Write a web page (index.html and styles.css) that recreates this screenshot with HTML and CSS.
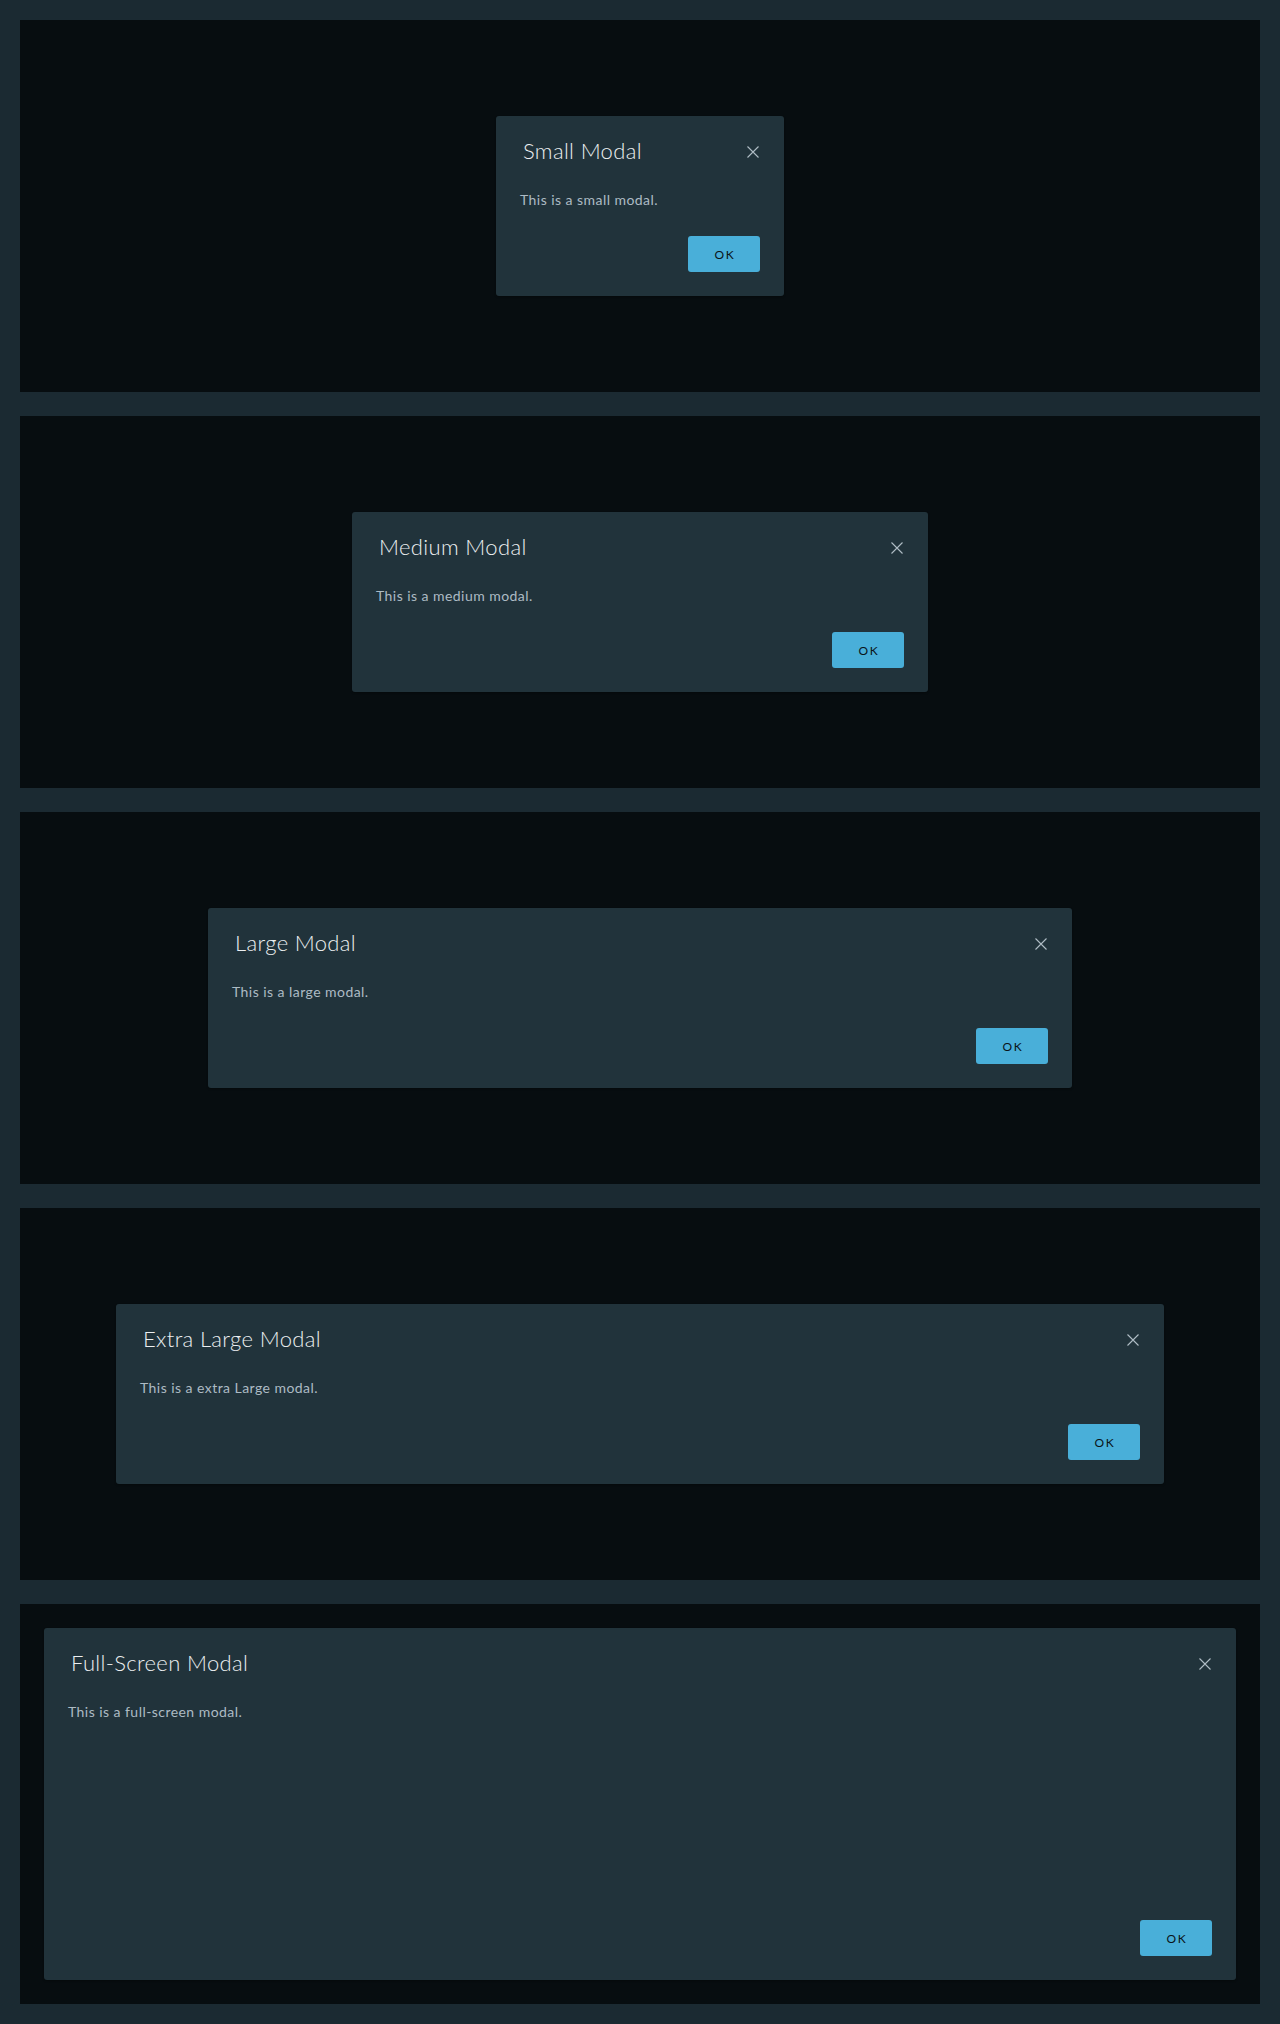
FILE: index.html
```html
<!DOCTYPE html>
<html lang="en">
<head>
<meta charset="utf-8">
<title>Modal sizes</title>
<link rel="stylesheet" href="styles.css">
</head>
<body>
<main class="page">
  <section class="stage">
    <div class="modal modal-sm">
      <div class="modal-header">
        <h3 class="modal-title">Small Modal</h3>
        <button class="close" aria-label="Close"><svg viewBox="0 0 12 12" width="12" height="12"><path d="M0.5 0.5 L11.5 11.5 M11.5 0.5 L0.5 11.5"/></svg></button>
      </div>
      <div class="modal-body">This is a small modal.</div>
      <div class="modal-footer"><button class="btn">OK</button></div>
    </div>
  </section>
  <section class="stage">
    <div class="modal modal-md">
      <div class="modal-header">
        <h3 class="modal-title">Medium Modal</h3>
        <button class="close" aria-label="Close"><svg viewBox="0 0 12 12" width="12" height="12"><path d="M0.5 0.5 L11.5 11.5 M11.5 0.5 L0.5 11.5"/></svg></button>
      </div>
      <div class="modal-body">This is a medium modal.</div>
      <div class="modal-footer"><button class="btn">OK</button></div>
    </div>
  </section>
  <section class="stage">
    <div class="modal modal-lg">
      <div class="modal-header">
        <h3 class="modal-title">Large Modal</h3>
        <button class="close" aria-label="Close"><svg viewBox="0 0 12 12" width="12" height="12"><path d="M0.5 0.5 L11.5 11.5 M11.5 0.5 L0.5 11.5"/></svg></button>
      </div>
      <div class="modal-body">This is a large modal.</div>
      <div class="modal-footer"><button class="btn">OK</button></div>
    </div>
  </section>
  <section class="stage">
    <div class="modal modal-xl">
      <div class="modal-header">
        <h3 class="modal-title">Extra Large Modal</h3>
        <button class="close" aria-label="Close"><svg viewBox="0 0 12 12" width="12" height="12"><path d="M0.5 0.5 L11.5 11.5 M11.5 0.5 L0.5 11.5"/></svg></button>
      </div>
      <div class="modal-body">This is a extra Large modal.</div>
      <div class="modal-footer"><button class="btn">OK</button></div>
    </div>
  </section>
  <section class="stage stage-full">
    <div class="modal modal-full">
      <div class="modal-header">
        <h3 class="modal-title">Full-Screen Modal</h3>
        <button class="close" aria-label="Close"><svg viewBox="0 0 12 12" width="12" height="12"><path d="M0.5 0.5 L11.5 11.5 M11.5 0.5 L0.5 11.5"/></svg></button>
      </div>
      <div class="modal-body">This is a full-screen modal.</div>
      <div class="modal-footer"><button class="btn">OK</button></div>
    </div>
  </section>
</main>
</body>
</html>
```

FILE: styles.css
```css
html, body {
  margin: 0;
  padding: 0;
}
body {
  background: #1b2a32;
  font-family: "Lato", "Open Sans", "Liberation Sans", sans-serif;
}
.page {
  padding: 20px;
  display: flex;
  flex-direction: column;
  gap: 24px;
}
.stage {
  height: 372px;
  box-sizing: border-box;
  background: #070d10;
  display: flex;
  align-items: center;
  justify-content: center;
  padding: 96px;
}
.stage-full {
  height: 400px;
  padding: 24px;
  align-items: stretch;
}
.modal {
  background: #21333b;
  border-radius: 3px;
  box-sizing: border-box;
  padding: 24px;
  display: flex;
  flex-direction: column;
  box-shadow: 0 1px 2px rgba(0,0,0,0.3);
}
.modal-sm { width: 288px; }
.modal-md { width: 576px; }
.modal-lg { width: 864px; }
.modal-xl { width: 1048px; }
.modal-full { flex: 1; }
.modal-header {
  display: flex;
  align-items: center;
  justify-content: space-between;
  height: 24px;
}
.modal-title {
  margin: 0;
  padding-left: 3px;
  font-size: 22px;
  font-weight: 300;
  line-height: 24px;
  color: #eceff1;
  letter-spacing: 0.35px;
  position: relative;
  top: -1px;
}
.close {
  width: 16px;
  height: 16px;
  padding: 0;
  margin-right: -1px;
  border: 0;
  background: transparent;
  display: flex;
  align-items: center;
  justify-content: center;
  cursor: pointer;
}
.close svg {
  display: block;
  stroke: #b0bdc5;
  stroke-width: 1.1;
  fill: none;
}
.modal-body {
  margin-top: 24px;
  font-size: 14px;
  line-height: 24px;
  color: #adbbc4;
  letter-spacing: 0.45px;
}
.modal-full .modal-body {
  flex: 1;
}
.modal-footer {
  margin-top: 24px;
  display: flex;
  justify-content: flex-end;
}
.btn {
  width: 72px;
  height: 36px;
  border: 0;
  border-radius: 3px;
  background: #49afd9;
  color: #0a1418;
  font-family: "Lato", "Open Sans", "Liberation Sans", sans-serif;
  font-size: 12px;
  font-weight: 400;
  letter-spacing: 0.14em;
  text-transform: uppercase;
  padding: 0 0 0 2px;
  cursor: pointer;
}
```
